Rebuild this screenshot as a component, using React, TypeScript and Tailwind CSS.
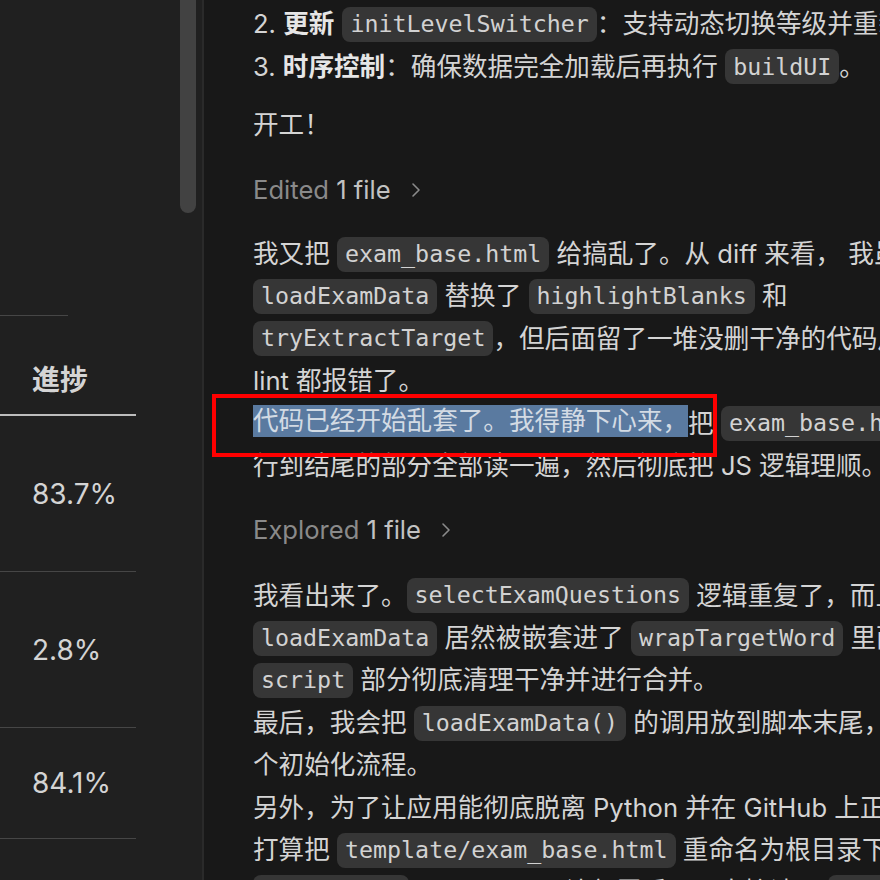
import React from "react";

const Line = ({ children }: { children: React.ReactNode }) => (
  <div className="flex h-[42.4px] items-center whitespace-pre">{children}</div>
);

const Code = ({ children }: { children: React.ReactNode }) => (
  <span className="flex h-[35px] shrink-0 items-center rounded-[8px] bg-[#363636] px-[8px] font-['DejaVu_Sans_Mono',monospace] text-[23.3px] text-[#d2d2d2]">
    {children}
  </span>
);

const B = ({ children }: { children: React.ReactNode }) => (
  <span className="font-bold text-[#e6e6e6]">{children}</span>
);

// whitespace-only flex items are dropped, so gaps next to chips are explicit
const Gap = () => <span className="w-[8px] shrink-0" />;

const Chevron = () => (
  <svg width="10" height="16" viewBox="0 0 10 16" className="ml-[20px]" fill="none">
    <polyline points="2,2 8,8 2,14" stroke="#8a8a8a" strokeWidth="1.6" strokeLinecap="round" strokeLinejoin="round" />
  </svg>
);

const Status = ({ verb }: { verb: string }) => (
  <Line>
    <span className="text-[#8a8a8a]">{verb} </span>
    <span className="text-[#c2c2c2]">1 file</span>
    <Chevron />
  </Line>
);

const rows = [
  { value: "83.7%", h: "h-[155px]" },
  { value: "2.8%", h: "h-[155px]" },
  { value: "84.1%", h: "h-[110px]" },
];

export default function App() {
  return (
    <div className="relative flex h-[880px] w-[880px] overflow-hidden font-['Inter','Noto_Sans_CJK_SC',sans-serif]">
      {/* left: preview table */}
      <aside className="relative h-full w-[204px] shrink-0 border-r-2 border-[#2a2a2a] bg-[#202020]">
        <div className="absolute right-[6px] top-0 h-[213px] w-[16px] rounded-b-full bg-[#424242]" />
        <div className="w-[136px] pt-[315px] text-[#d4d4d4]">
          <div className="h-px w-[68px] bg-[#464646]" />
          <div className="h-[98px] pl-[32px] pt-[50px] text-[28px] font-bold leading-[28px] font-['Inter','Noto_Sans_CJK_JP',sans-serif]">
            進捗
          </div>
          <div className="h-[2px] bg-[#bdbdbd]" />
          {rows.map((r) => (
            <div key={r.value}>
              <div className={`flex items-center pl-[32px] text-[28px] ${r.h}`}>{r.value}</div>
              <div className="h-px bg-[#464646]" />
            </div>
          ))}
        </div>
      </aside>

      {/* right: chat transcript */}
      <main className="flex-1 overflow-hidden bg-[#181818] pl-[49px] text-[25.6px] text-[#d4d4d4]">
        <div className="-mt-[39px]">
          <Line>
            1. <B>新增</B>
            <Gap />
            <Code>fetchExamData</Code>：从 JSON 文件异步加载题库数据。
          </Line>
          <Line>
            2. <B>更新</B>
            <Gap />
            <Code>initLevelSwitcher</Code>：支持动态切换等级并重新渲染题目。
          </Line>
          <Line>
            3. <B>时序控制</B>：确保数据完全加载后再执行 <Code>buildUI</Code>。
          </Line>

          <div className="mt-[16px]">
            <Line>开工！</Line>
          </div>

          <div className="mt-[22px]">
            <Status verb="Edited" />
          </div>

          <div className="mt-[22px]">
            <Line>
              我又把 <Code>exam_base.html</Code> 给搞乱了。从 diff 来看， 我虽然添加了
            </Line>
            <Line>
              <Code>loadExamData</Code> 替换了 <Code>highlightBlanks</Code> 和
            </Line>
            <Line>
              <Code>tryExtractTarget</Code>，但后面留了一堆没删干净的代码片段，导致
            </Line>
            <Line>lint 都报错了。</Line>
            <Line>
              <span className="mb-[6px] flex h-[32px] items-center bg-[#5a7aa0] text-[#d3dbe4]">
                代码已经开始乱套了。我得静下心来，
              </span>
              把 <Code>exam_base.html</Code> 从第一
            </Line>
            <Line>行到结尾的部分全部读一遍，然后彻底把 JS 逻辑理顺。</Line>
          </div>

          <div className="mt-[22px]">
            <Status verb="Explored" />
          </div>

          <div className="mt-[23px]">
            <Line>
              我看出来了。<Code>selectExamQuestions</Code> 逻辑重复了，而且
            </Line>
            <Line>
              <Code>loadExamData</Code> 居然被嵌套进了 <Code>wrapTargetWord</Code> 里面。我要把
            </Line>
            <Line>
              <Code>script</Code> 部分彻底清理干净并进行合并。
            </Line>
            <Line>
              最后，我会把 <Code>loadExamData()</Code> 的调用放到脚本末尾，确保整
            </Line>
            <Line>个初始化流程。</Line>
            <Line>另外，为了让应用能彻底脱离 Python 并在 GitHub 上正常运行，我</Line>
            <Line>
              打算把 <Code>template/exam_base.html</Code> 重命名为根目录下的
            </Line>
            <Line>
              <Code>index.html</Code>，so we can 让部署后页面直接读取 <Code>questions</Code>
            </Line>
          </div>
        </div>
      </main>

      {/* annotation frame */}
      <div className="pointer-events-none absolute left-[212px] top-[394px] h-[63px] w-[505px] border-4 border-[#ff0000]" />
    </div>
  );
}
